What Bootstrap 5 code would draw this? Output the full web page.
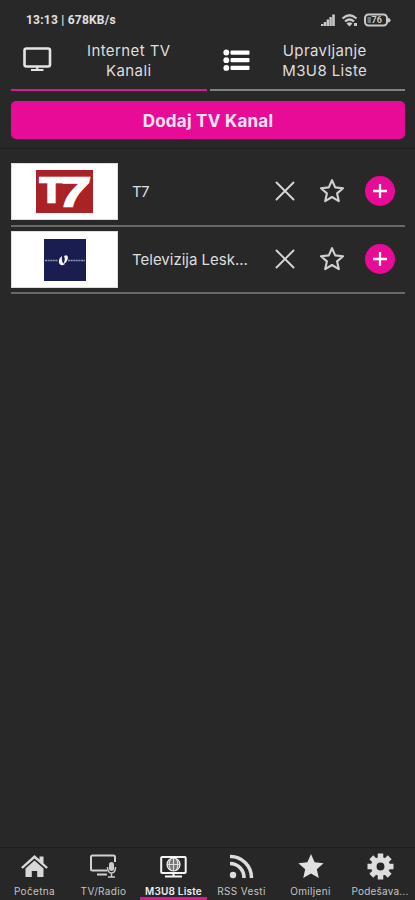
<!DOCTYPE html>
<html lang="sr">
<head>
<meta charset="utf-8">
<meta name="viewport" content="width=device-width, initial-scale=1">
<title>M3U8 Liste</title>
<link href="https://cdn.jsdelivr.net/npm/bootstrap@5.3.0/dist/css/bootstrap.min.css" rel="stylesheet">
<style>
:root{--pink:#e80b98;--ink:#dedede}
body{background:#282828;color:var(--ink);font-family:Inter,"Open Sans",sans-serif;height:900px;overflow:hidden}
svg{display:block;flex:none}
.status{height:40px;padding:0 24px 0 26px;font:700 12px/40px Roboto,sans-serif;color:#e0e0e0}
.status span{letter-spacing:.22px}
.tabs{height:51px;padding:0 10px 0 11px;gap:3px}
.tab{border-bottom:2px solid #828282;height:51px;font-size:15px;line-height:19.5px;letter-spacing:.4px;color:var(--ink);text-decoration:none}
.tab.on{border-color:#cf2093}
.tab .lbl{margin-top:1px;height:40px;padding:0 14px 0 9px}
.tab.on .lbl{padding:0 35px 0 34px}
.screen-ico{margin:7px 0 0 12px}
.list-ico{margin:9px 0 0 13px}
.add{background:var(--pink);color:#ffe4f6;border-radius:5px;height:38px;margin:10px 10px 0 11px;font-size:17px;font-weight:700;line-height:40px;letter-spacing:.25px}
.add:hover{background:var(--pink);color:#fff}
.sep{height:1px;background:#202020;margin-top:9px}
.chan{margin:4px 10px 0 11px;height:64px;padding-bottom:5px;border-bottom:2px solid #686868}
.chan:first-child{margin-top:14px}
.chan:last-child{height:63px;padding-bottom:4px}
.logo{width:107px;height:57px;background:#fff;border:1px solid #ddd}
.name{width:128px;margin-left:14px;padding-top:1px;font-size:15px;white-space:nowrap}
.name.short{letter-spacing:.6px}
.acts{gap:20px;margin:0 0 1px 15px}
.plus{width:30px;height:30px;border-radius:50%;background:var(--pink)}
.bar{height:53px;border-top:1px solid #1f1f1f;background:#272727}
.item{width:69px;font-size:10px;line-height:12px;letter-spacing:.35px;color:#c4c4c4;text-decoration:none;white-space:nowrap}
.item:last-child{width:70px;letter-spacing:.2px}
.item.on{color:#eee;font-weight:600;letter-spacing:.2px;box-shadow:inset 0 -3px #d51b94;width:67px;margin:0 0 0 2px}
.ico{height:28px;margin:4px 0 5px}
</style>
<script src="https://cdn.jsdelivr.net/npm/bootstrap@5.3.0/dist/js/bootstrap.bundle.min.js"></script>
</head>
<body class="d-flex flex-column m-0">
<svg width="0" height="0" class="d-none">
<symbol id="x" viewBox="0 0 20 20"><path d="M1.500 1.500l17 17M18.500 1.500l-17 17" stroke="#d6d6d6" stroke-width="1.900" stroke-linecap="round"/></symbol>
<symbol id="star" viewBox="0 0 26 26"><path d="M13 2.200l3.200 7.200 7.800.8-5.900 5.200 1.700 7.700-6.800-4.100-6.800 4.100 1.700-7.700L2 10.200l7.800-.8z" fill="none" stroke="#d0d0d0" stroke-width="2.100" stroke-linejoin="round"/></symbol>
<symbol id="add" viewBox="0 0 16 16"><path d="M8 1v14M1 8h14" stroke="#fff" stroke-width="2.300"/></symbol>
</svg>
<header class="status d-flex justify-content-between align-items-center">
<span>13:13 | 678KB/s</span>
<svg width="72" height="14" viewBox="0 0 72 14" fill="#c9c9c9"><path d="M2 13v-2h2.400v2zM4.800 13V9h2.400v4zM7.600 13V6.500H10V13zM10.400 13V4h2.400v9zM13.200 13V1.500h2.600V13z"/><path d="M23.500 5.500q7-6.500 14 0M26 8.500q4.500-4 9 0" fill="none" stroke="#c9c9c9" stroke-width="2.200"/><path d="M27.500 10.500q3-2.500 6 0l-3 3zM35 10h3v3h-3z"/><rect x="46" y="1.500" width="22" height="11" rx="3.500" fill="none" stroke="#c9c9c9" stroke-width="2"/><path d="M48.500 4h3.500v6h-3.500z" fill="#777"/><path d="M69 5q2.500 0 2.500 2.300T69 9.600z"/><text x="52.500" y="10.300" font-family="Roboto,sans-serif" font-size="9" font-weight="700">76</text></svg>
</header>
<nav class="tabs d-flex">
<a href="#" class="tab on d-flex w-50"><svg class="screen-ico" width="29" height="25" viewBox="0 0 29 25" fill="none" stroke="#e4e4e4"><rect x="1.500" y="1.500" width="25.500" height="18" rx="2" stroke-width="2.600"/><path d="M14.200 20v3M8 23h12.500" stroke-width="2.200"/></svg><span class="lbl text-center flex-fill">Internet TV<br>Kanali</span></a>
<a href="#" class="tab d-flex w-50"><svg class="list-ico" width="27" height="23" viewBox="0 0 27 23" fill="#fff"><circle cx="3.300" cy="3.500" r="2.900"/><circle cx="3.300" cy="11.200" r="2.900"/><circle cx="3.300" cy="18.900" r="2.900"/><rect x="7.500" y="1.500" width="19" height="4.200" rx="1"/><rect x="7.500" y="9.100" width="19" height="4.200" rx="1"/><rect x="7.500" y="16.800" width="19" height="4.200" rx="1"/></svg><span class="lbl text-center flex-fill">Upravljanje<br>M3U8 Liste</span></a>
</nav>
<button class="add btn p-0 border-0">Dodaj TV Kanal</button>
<div class="sep"></div>
<main class="flex-grow-1">
<div class="chan d-flex align-items-center">
<div class="logo d-flex align-items-center justify-content-center"><svg width="57" height="43" viewBox="0 0 57 43"><path fill="#a92226" d="M0 0h57v43H0z"/><g fill="#fff" stroke="#fff" font-family="Liberation Sans,sans-serif" font-weight="700"><text x="4" y="32" font-size="35" stroke-width="2.600" textLength="23" lengthAdjust="spacingAndGlyphs">T</text><text x="25" y="36" font-size="40" stroke-width="2.400" font-style="italic" textLength="26" lengthAdjust="spacingAndGlyphs">7</text></g></svg></div>
<div class="name short">T7</div>
<div class="acts d-flex align-items-center"><svg width="20" height="20"><use href="#x"/></svg><svg class="ms-1 me-n1" width="26" height="26"><use href="#star"/></svg>
<span class="plus d-flex align-items-center justify-content-center"><svg width="16" height="16"><use href="#add"/></svg></span></div></div>
<div class="chan d-flex align-items-center">
<div class="logo d-flex align-items-center justify-content-center"><svg width="42" height="42" viewBox="0 0 42 42"><path fill="#191d50" d="M0 0h42v42H0z"/><path d="M1 21.500h13M24 21.500h17" stroke="#9399b6" stroke-width="1.300" stroke-dasharray="2 .6"/><path fill="#f5f5f5" d="M18 17q-4 3-3 7 2 4 6 1-4-1-3-8zM20 17q4-2 4 2-1 5-5 6 3-4 1-8z"/></svg></div>
<div class="name">Televizija Lesk...</div>
<div class="acts d-flex align-items-center"><svg width="20" height="20"><use href="#x"/></svg><svg class="ms-1 me-n1" width="26" height="26"><use href="#star"/></svg>
<span class="plus d-flex align-items-center justify-content-center"><svg width="16" height="16"><use href="#add"/></svg></span></div></div>
</main>
<footer class="bar d-flex">
<a href="#" class="item d-flex flex-column align-items-center"><span class="ico d-flex align-items-center"><svg width="27" height="23" viewBox="0 0 27 23" fill="#d8d8d8"><path d="M13.500 0l5 4.500V1.500h4v6.700l4.500 4-1.700 1.600L13.500 3.500 1.700 13.800 0 12.200z"/><path d="M13.500 5.500l9 8V22h-6.300v-6h-5.400v6H4.500v-8.500z"/></svg></span><span>Početna</span></a>
<a href="#" class="item d-flex flex-column align-items-center"><span class="ico d-flex align-items-center"><svg width="27" height="24" viewBox="0 0 27 24"><path d="M17 16.500H2.500Q1 16.500 1 15V3Q1 1.500 2.500 1.500h21Q25 1.500 25 3v5M7 20.500h10" fill="none" stroke="#d0d0d0" stroke-width="2"/><rect x="19" y="8" width="5" height="9" rx="2.500" fill="#ccc"/><path d="M17.500 13q0 6 4 6t4-6M21.500 19v4M18 23h7" fill="none" stroke="#ccc" stroke-width="1.500"/></svg></span><span>TV/Radio</span></a>
<a href="#" class="item on d-flex flex-column align-items-center"><span class="ico d-flex align-items-center"><svg width="27" height="23" viewBox="0 0 27 23" fill="none" stroke="#f5f5f5" stroke-width="2"><rect x="1.200" y="2" width="24.500" height="16" rx="1"/><path d="M13.500 18v3M5 21.500h17"/><circle cx="13.500" cy="9.500" r="6.500" fill="#777" stroke-width="1.200"/><path d="M7 9.500h13M13.500 3v13M10.500 4q-2.500 5.500 0 11M16.500 4q2.500 5.500 0 11" stroke="#ddd" stroke-width="1.100"/></svg></span><span>M3U8 Liste</span></a>
<a href="#" class="item d-flex flex-column align-items-center"><span class="ico d-flex align-items-center"><svg width="25" height="25" viewBox="0 0 25 25" fill="none" stroke="#ddd" stroke-width="3.500"><circle cx="4" cy="21" r="3.200" fill="#ddd" stroke="none"/><path d="M1 9.500A14 14 0 0 1 15 24M1 2.500A21 21 0 0 1 22.500 24"/></svg></span><span>RSS Vesti</span></a>
<a href="#" class="item d-flex flex-column align-items-center"><span class="ico d-flex align-items-center"><svg width="26" height="25" viewBox="0 0 26 25" fill="#e0e0e0"><path d="M13 0l3.600 8.300 9 .9-6.800 6 2 8.800L13 19.400 5.200 24l2-8.800-6.800-6 9-.9z"/></svg></span><span>Omiljeni</span></a>
<a href="#" class="item d-flex flex-column align-items-center"><span class="ico d-flex align-items-center"><svg width="27" height="27" viewBox="-13.500 -13.500 27 27"><g stroke="#ddd" stroke-width="5.500"><path d="M0-13V-7M0 13V7M-13 0H-7M13 0H7M-9.200-9.200L-5-5M9.200 9.200L5 5M-9.200 9.200L-5 5M9.200-9.200L5-5"/></g><circle r="6.700" fill="none" stroke="#ddd" stroke-width="5.500"/></svg></span><span>Podešava...</span></a>
</footer>
</body>
</html>
